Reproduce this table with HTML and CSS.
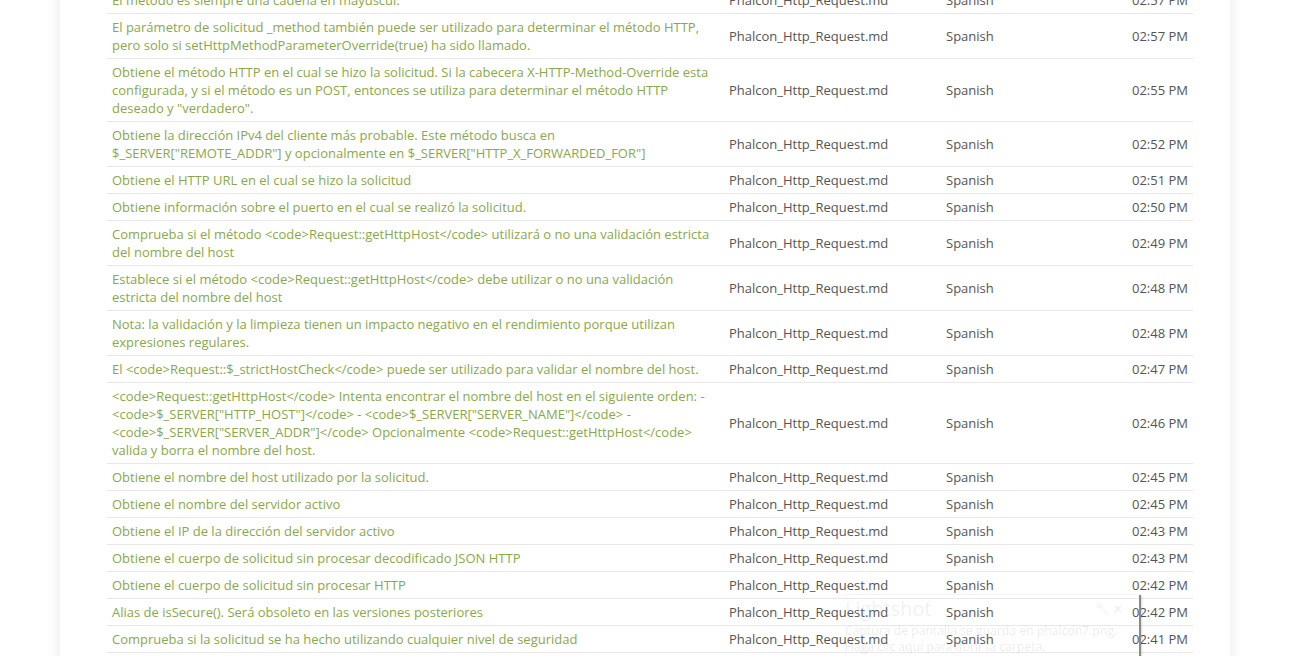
FILE: index.html
```html
<!DOCTYPE html>
<html lang="es">

<head>
    <meta charset="UTF-8">
    <meta name="viewport" content="width=device-width, initial-scale=1.0">
    <title>Traducciones recientes</title>
    <link rel="stylesheet" href="styles.css">
</head>

<body>
    <div class="page">
        <table class="log">
            <tr>
                <td class="msg">El método es siempre una cadena en mayúscul.</td>
                <td class="file">Phalcon_Http_Request.md</td>
                <td class="lang">Spanish</td>
                <td class="time">02:57 PM</td>
            </tr>
            <tr>
                <td class="msg">El parámetro de solicitud _method también puede ser utilizado para determinar el método HTTP, pero solo si setHttpMethodParameterOverride(true) ha sido llamado.</td>
                <td class="file">Phalcon_Http_Request.md</td>
                <td class="lang">Spanish</td>
                <td class="time">02:57 PM</td>
            </tr>
            <tr>
                <td class="msg">Obtiene el método HTTP en el cual se hizo la solicitud. Si la cabecera X-HTTP-Method-Override esta configurada, y si el método es un POST, entonces se utiliza para determinar el método HTTP deseado y "verdadero".</td>
                <td class="file">Phalcon_Http_Request.md</td>
                <td class="lang">Spanish</td>
                <td class="time">02:55 PM</td>
            </tr>
            <tr>
                <td class="msg">Obtiene la dirección IPv4 del cliente más probable. Este método busca en $_SERVER["REMOTE_ADDR"] y opcionalmente en $_SERVER["HTTP_X_FORWARDED_FOR"]</td>
                <td class="file">Phalcon_Http_Request.md</td>
                <td class="lang">Spanish</td>
                <td class="time">02:52 PM</td>
            </tr>
            <tr>
                <td class="msg">Obtiene el HTTP URL en el cual se hizo la solicitud</td>
                <td class="file">Phalcon_Http_Request.md</td>
                <td class="lang">Spanish</td>
                <td class="time">02:51 PM</td>
            </tr>
            <tr>
                <td class="msg">Obtiene información sobre el puerto en el cual se realizó la solicitud.</td>
                <td class="file">Phalcon_Http_Request.md</td>
                <td class="lang">Spanish</td>
                <td class="time">02:50 PM</td>
            </tr>
            <tr>
                <td class="msg">Comprueba si el método &lt;code&gt;Request::getHttpHost&lt;/code&gt; utilizará o no una validación estricta del nombre del host</td>
                <td class="file">Phalcon_Http_Request.md</td>
                <td class="lang">Spanish</td>
                <td class="time">02:49 PM</td>
            </tr>
            <tr>
                <td class="msg">Establece si el método &lt;code&gt;Request::getHttpHost&lt;/code&gt; debe utilizar o no una validación estricta del nombre del host</td>
                <td class="file">Phalcon_Http_Request.md</td>
                <td class="lang">Spanish</td>
                <td class="time">02:48 PM</td>
            </tr>
            <tr>
                <td class="msg">Nota: la validación y la limpieza tienen un impacto negativo en el rendimiento porque utilizan expresiones regulares.</td>
                <td class="file">Phalcon_Http_Request.md</td>
                <td class="lang">Spanish</td>
                <td class="time">02:48 PM</td>
            </tr>
            <tr>
                <td class="msg">El &lt;code&gt;Request::$_strictHostCheck&lt;/code&gt; puede ser utilizado para validar el nombre del host.</td>
                <td class="file">Phalcon_Http_Request.md</td>
                <td class="lang">Spanish</td>
                <td class="time">02:47 PM</td>
            </tr>
            <tr>
                <td class="msg">&lt;code&gt;Request::getHttpHost&lt;/code&gt; Intenta encontrar el nombre del host en el siguiente orden: - &lt;code&gt;$_SERVER["HTTP_HOST"]&lt;/code&gt; - &lt;code&gt;$_SERVER["SERVER_NAME"]&lt;/code&gt; - &lt;code&gt;$_SERVER["SERVER_ADDR"]&lt;/code&gt; Opcionalmente &lt;code&gt;Request::getHttpHost&lt;/code&gt; valida y borra el nombre del host.</td>
                <td class="file">Phalcon_Http_Request.md</td>
                <td class="lang">Spanish</td>
                <td class="time">02:46 PM</td>
            </tr>
            <tr>
                <td class="msg">Obtiene el nombre del host utilizado por la solicitud.</td>
                <td class="file">Phalcon_Http_Request.md</td>
                <td class="lang">Spanish</td>
                <td class="time">02:45 PM</td>
            </tr>
            <tr>
                <td class="msg">Obtiene el nombre del servidor activo</td>
                <td class="file">Phalcon_Http_Request.md</td>
                <td class="lang">Spanish</td>
                <td class="time">02:45 PM</td>
            </tr>
            <tr>
                <td class="msg">Obtiene el IP de la dirección del servidor activo</td>
                <td class="file">Phalcon_Http_Request.md</td>
                <td class="lang">Spanish</td>
                <td class="time">02:43 PM</td>
            </tr>
            <tr>
                <td class="msg">Obtiene el cuerpo de solicitud sin procesar decodificado JSON HTTP</td>
                <td class="file">Phalcon_Http_Request.md</td>
                <td class="lang">Spanish</td>
                <td class="time">02:43 PM</td>
            </tr>
            <tr>
                <td class="msg">Obtiene el cuerpo de solicitud sin procesar HTTP</td>
                <td class="file">Phalcon_Http_Request.md</td>
                <td class="lang">Spanish</td>
                <td class="time">02:42 PM</td>
            </tr>
            <tr>
                <td class="msg">Alias de isSecure(). Será obsoleto en las versiones posteriores</td>
                <td class="file">Phalcon_Http_Request.md</td>
                <td class="lang">Spanish</td>
                <td class="time">02:42 PM</td>
            </tr>
            <tr>
                <td class="msg">Comprueba si la solicitud se ha hecho utilizando cualquier nivel de seguridad</td>
                <td class="file">Phalcon_Http_Request.md</td>
                <td class="lang">Spanish</td>
                <td class="time">02:41 PM</td>
            </tr>
            <tr>
                <td class="msg">Comprueba si la solicitud se ha hecho utilizando SSL</td>
                <td class="file">Phalcon_Http_Request.md</td>
                <td class="lang">Spanish</td>
                <td class="time">02:41 PM</td>
            </tr>
        </table>
    </div>

    <!-- aviso de Lightshot, casi transparente -->
    <div class="toast">
        <div class="toast-head">
            <span class="toast-title">Lightshot</span>
            <span class="toast-icons">&#128295; &#10005;</span>
        </div>
        <div class="toast-body">Captura de pantalla se guarda en phalcon7.png. Haga clic aquí para abrir la carpeta.</div>
    </div>
</body>

</html>
```

FILE: styles.css
```css
body {
    margin: 0;
    font-family: "Open Sans", "Liberation Sans", sans-serif;
    font-size: 13px;
    line-height: 18px;
    background-color: #fff;
    overflow: hidden;
}

.page {
    width: 1170px;
    margin: -14px 0 0 60px;
    padding: 0 37px 40px 47px;
    box-sizing: border-box;
    background-color: #fff;
    box-shadow: 0 0 14px rgba(0, 0, 0, 0.09);
}

.log {
    width: 100%;
    border-collapse: collapse;
}

.log td {
    padding: 4px 5px;
    border-top: 1px solid #e8e8e8;
    vertical-align: middle;
    color: #555;
}

.log .msg {
    width: 607px;
    color: #8aa84a;
}

.log .file {
    width: 207px;
}

.log .time {
    text-align: right;
    white-space: nowrap;
}

/* aviso flotante */
.toast {
    position: fixed;
    left: 845px;
    top: 595px;
    width: 294px;
    height: 80px;
    border-right: 2px solid #8a8a8a;
    box-shadow: 1px 0 2px rgba(0, 0, 0, 0.15);
    color: rgba(120, 150, 200, 0.13);
}

.toast-head {
    display: flex;
    justify-content: space-between;
    align-items: center;
    height: 28px;
}

.toast-title {
    font-size: 20px;
    line-height: 28px;
}

.toast-icons {
    font-size: 12px;
    margin-right: 16px;
    color: rgba(0, 0, 0, 0.08);
}

.toast-body {
    color: rgba(0, 0, 0, 0.08);
    font-size: 12px;
    line-height: 16px;
    letter-spacing: 0.1px;
}
```
